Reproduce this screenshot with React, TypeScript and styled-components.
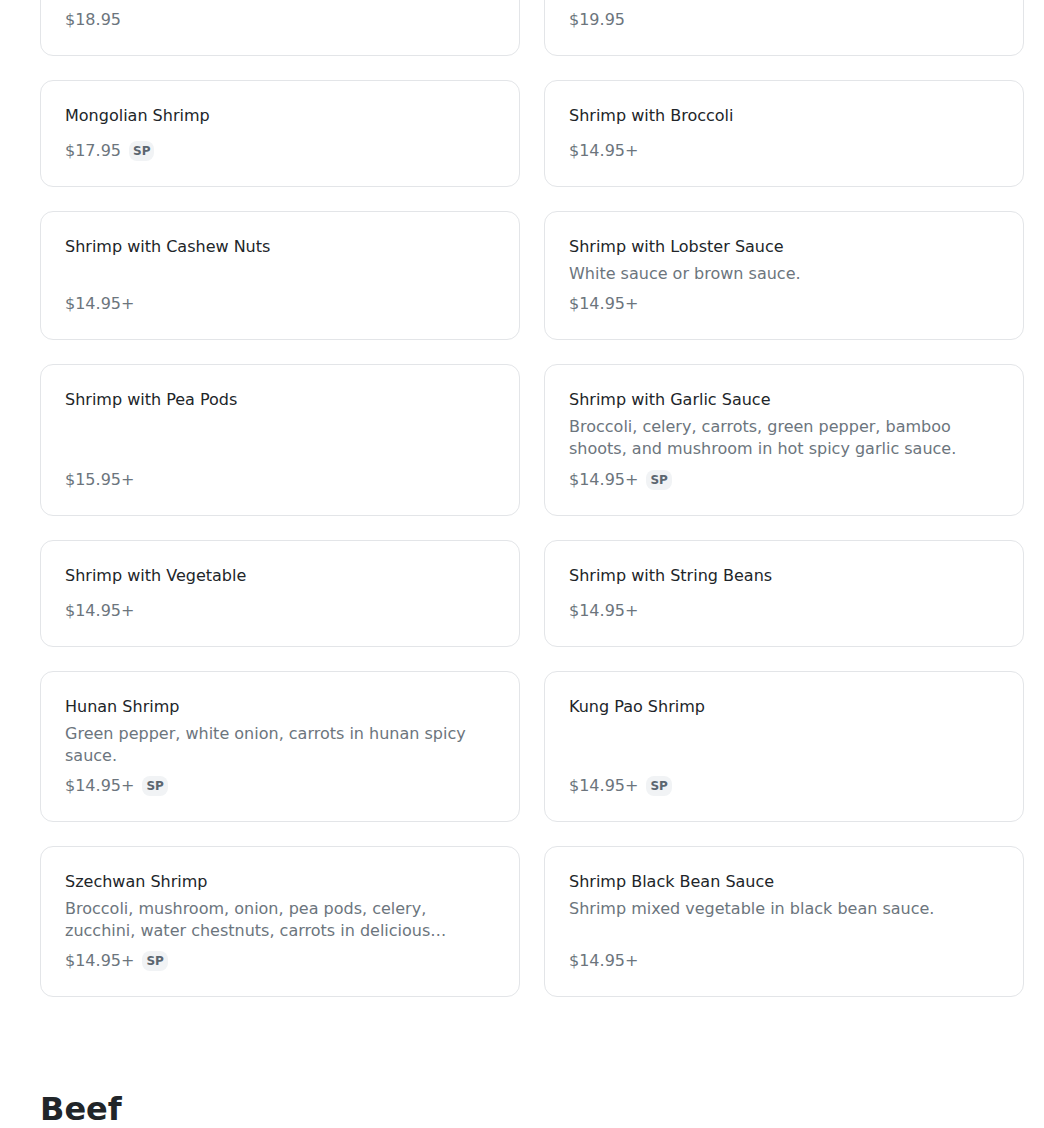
import React from "react";
import styled, { createGlobalStyle } from "styled-components";

const GlobalStyle = createGlobalStyle`
  html, body {
    margin: 0;
    padding: 0;
    background: #ffffff;
  }
  body {
    font-family: "DejaVu Sans", "Noto Sans", sans-serif;
    color: #212529;
    overflow: hidden;
  }
  * { box-sizing: border-box; }
`;

type Item = {
  name: string;
  desc?: string;
  price: string;
  spicy?: boolean;
};

type Category = {
  title?: string;
  items: Item[];
};

const shrimp: Item[] = [
  { name: "Shrimp Egg Foo Young", price: "$18.95" },
  { name: "Salt and Pepper Shrimp", price: "$19.95" },
  { name: "Mongolian Shrimp", price: "$17.95", spicy: true },
  { name: "Shrimp with Broccoli", price: "$14.95+" },
  { name: "Shrimp with Cashew Nuts", price: "$14.95+" },
  { name: "Shrimp with Lobster Sauce", desc: "White sauce or brown sauce.", price: "$14.95+" },
  { name: "Shrimp with Pea Pods", price: "$15.95+" },
  {
    name: "Shrimp with Garlic Sauce",
    desc: "Broccoli, celery, carrots, green pepper, bamboo shoots, and mushroom in hot spicy garlic sauce.",
    price: "$14.95+",
    spicy: true,
  },
  { name: "Shrimp with Vegetable", price: "$14.95+" },
  { name: "Shrimp with String Beans", price: "$14.95+" },
  {
    name: "Hunan Shrimp",
    desc: "Green pepper, white onion, carrots in hunan spicy sauce.",
    price: "$14.95+",
    spicy: true,
  },
  { name: "Kung Pao Shrimp", price: "$14.95+", spicy: true },
  {
    name: "Szechwan Shrimp",
    desc: "Broccoli, mushroom, onion, pea pods, celery, zucchini, water chestnuts, carrots in delicious Szechwan sauce.",
    price: "$14.95+",
    spicy: true,
  },
  {
    name: "Shrimp Black Bean Sauce",
    desc: "Shrimp mixed vegetable in black bean sauce.",
    price: "$14.95+",
  },
];

const categories: Category[] = [
  { items: shrimp },
  {
    title: "Beef",
    items: [
      { name: "Beef with Broccoli", price: "$15.95+" },
      { name: "Pepper Steak", price: "$15.95+" },
    ],
  },
];

const Page = styled.main`
  /* page is shown scrolled part-way into the menu */
  margin-top: -51px;
  padding: 0 20px 0 40px;
`;

const Section = styled.section`
  margin-bottom: 93px;
`;

const SectionTitle = styled.h2`
  margin: 0 0 24px;
  font-size: 32px;
  line-height: 1.2;
  font-weight: 700;
  color: #212529;
`;

const Grid = styled.div`
  display: grid;
  grid-template-columns: repeat(2, 1fr);
  gap: 24px;
`;

const Card = styled.article`
  display: flex;
  flex-direction: column;
  border: 1px solid #e3e5e8;
  border-radius: 13px;
  padding: 23px 24px 23px;
  background: #fff;
`;

const Name = styled.h3`
  margin: 0 0 4px;
  font-size: 16px;
  line-height: 24px;
  font-weight: 400;
  color: #212529;
`;

const Desc = styled.p`
  margin: 0;
  font-size: 16px;
  line-height: 22.2px;
  color: #6c757d;
  display: -webkit-box;
  -webkit-line-clamp: 2;
  -webkit-box-orient: vertical;
  overflow: hidden;
`;

const PriceRow = styled.div`
  margin-top: auto;
  padding-top: 7px;
  display: flex;
  align-items: center;
  gap: 8px;
  height: 31px;
`;

const Price = styled.span`
  font-size: 16px;
  line-height: 24px;
  color: #6c757d;
`;

const Badge = styled.span`
  display: inline-flex;
  align-items: center;
  justify-content: center;
  height: 20px;
  padding: 0 4px;
  border-radius: 8px;
  background: #f1f3f5;
  color: #5c6670;
  font-size: 12px;
  font-weight: 700;
`;

function MenuCard({ item }: { item: Item }) {
  return (
    <Card>
      <Name>{item.name}</Name>
      {item.desc && <Desc>{item.desc}</Desc>}
      <PriceRow>
        <Price>{item.price}</Price>
        {item.spicy && <Badge>SP</Badge>}
      </PriceRow>
    </Card>
  );
}

export default function App() {
  return (
    <>
      <GlobalStyle />
      <Page>
        {categories.map((cat, i) => (
          <Section key={i}>
            {cat.title && <SectionTitle>{cat.title}</SectionTitle>}
            <Grid>
              {cat.items.map((item) => (
                <MenuCard key={item.name} item={item} />
              ))}
            </Grid>
          </Section>
        ))}
      </Page>
    </>
  );
}
